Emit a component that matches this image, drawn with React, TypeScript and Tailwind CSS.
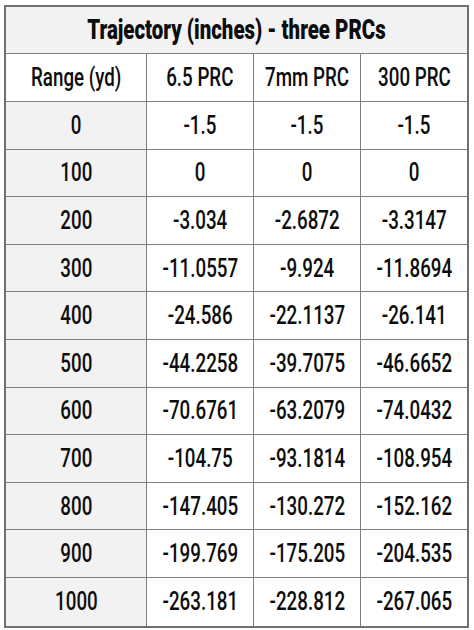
import React from "react";

const rows: [string, string, string, string][] = [
  ["0", "-1.5", "-1.5", "-1.5"],
  ["100", "0", "0", "0"],
  ["200", "-3.034", "-2.6872", "-3.3147"],
  ["300", "-11.0557", "-9.924", "-11.8694"],
  ["400", "-24.586", "-22.1137", "-26.141"],
  ["500", "-44.2258", "-39.7075", "-46.6652"],
  ["600", "-70.6761", "-63.2079", "-74.0432"],
  ["700", "-104.75", "-93.1814", "-108.954"],
  ["800", "-147.405", "-130.272", "-152.162"],
  ["900", "-199.769", "-175.205", "-204.535"],
  ["1000", "-263.181", "-228.812", "-267.065"],
];

function Txt({ children }: { children: React.ReactNode }) {
  return <span className="inline-block whitespace-nowrap scale-x-[0.75] font-medium">{children}</span>;
}

export default function App() {
  return (
    <div className="w-[474px] h-[630px] bg-white pt-[5px] pl-[4px]" style={{ fontFamily: "Roboto, 'Liberation Sans', sans-serif" }}>
      <div className="w-[465px] border-2 border-[#707070] bg-white text-[#0d0d0d] text-[25px] leading-none">
        <div className="h-[47px] flex items-center justify-center bg-[#f2f2f2] border-b border-[#808080]">
          <span className="inline-block whitespace-nowrap scale-x-[0.73] font-black text-[28px]">Trajectory (inches) - three PRCs</span>
        </div>
        <div className="grid grid-cols-[141px_107px_107px_1fr] h-[48px] border-b border-[#808080]">
          <div className="flex items-center justify-center border-r border-[#808080]"><Txt>Range (yd)</Txt></div>
          <div className="flex items-center justify-center border-r border-[#808080]"><Txt>6.5 PRC</Txt></div>
          <div className="flex items-center justify-center border-r border-[#808080]"><Txt>7mm PRC</Txt></div>
          <div className="flex items-center justify-center"><Txt>300 PRC</Txt></div>
        </div>
        {rows.map((r, i) => (
          <div
            key={i}
            className={
              "grid grid-cols-[141px_107px_107px_1fr] h-[47.6px] " +
              (i < rows.length - 1 ? "border-b border-[#808080]" : "")
            }
          >
            <div className="flex items-center justify-center bg-[#f2f2f2] border-r border-[#808080]"><Txt>{r[0]}</Txt></div>
            <div className="flex items-center justify-center border-r border-[#808080]"><Txt>{r[1]}</Txt></div>
            <div className="flex items-center justify-center border-r border-[#808080]"><Txt>{r[2]}</Txt></div>
            <div className="flex items-center justify-center"><Txt>{r[3]}</Txt></div>
          </div>
        ))}
      </div>
    </div>
  );
}
